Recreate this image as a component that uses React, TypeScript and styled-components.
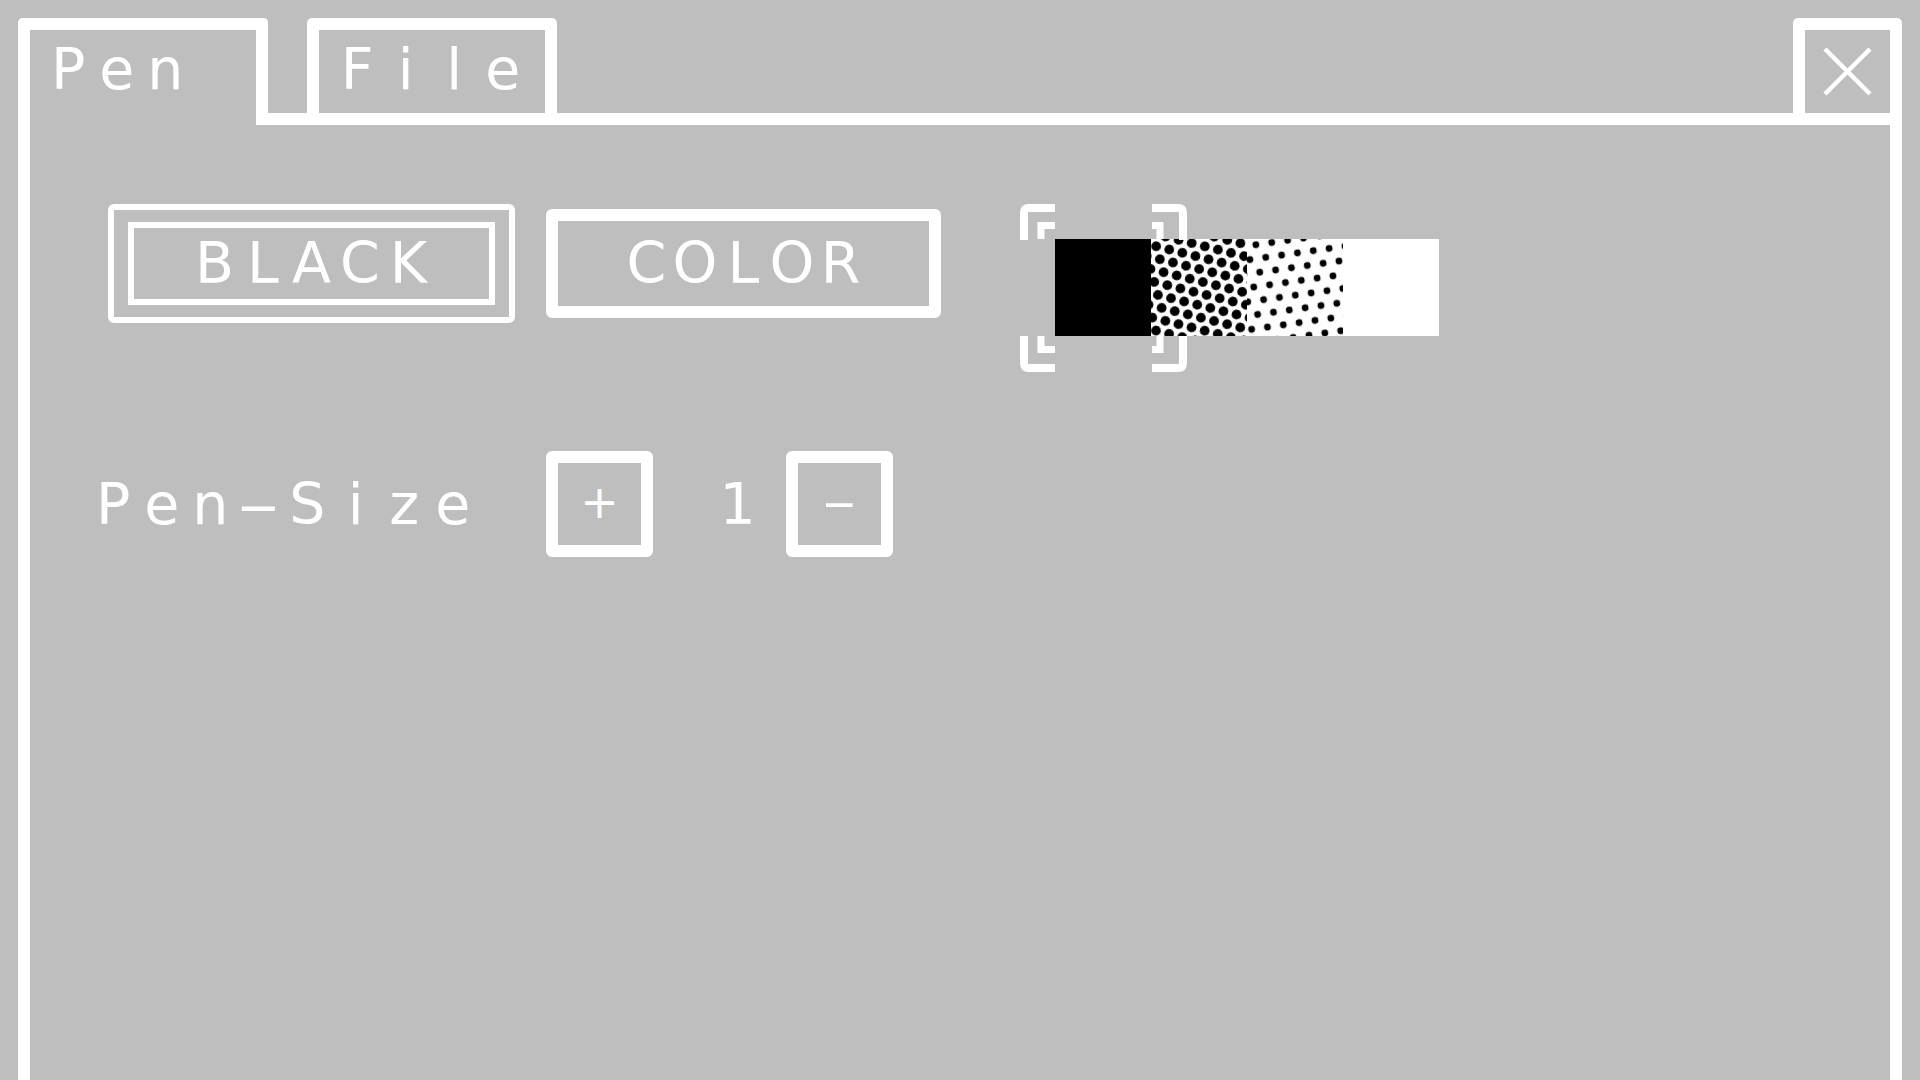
import React from 'react';
import styled, { createGlobalStyle } from 'styled-components';

const INK = '#ffffff';
const PAPER = '#bebebe';
const CELL = 48.5;
const SWATCH_W = 96;

const GlobalStyle = createGlobalStyle`
    html, body {
        margin: 0;
        padding: 0;
        background: ${PAPER};
        overflow: hidden;
    }
`;

const Screen = styled.div`
    box-sizing: border-box;
    height: 100vh;
    padding: 18px 18px 0;
    display: flex;
    flex-direction: column;
    background: ${PAPER};
    color: ${INK};
    font-family: 'DejaVu Sans', 'Liberation Sans', sans-serif;
    font-size: 57px;
    line-height: 57px;
`;

/* ---------- fixed-pitch text: every character sits in its own cell ---------- */

const CellRow = styled.span`
    display: inline-flex;
    white-space: pre;
`;

const Cell = styled.span`
    display: inline-block;
    width: ${CELL}px;
    text-align: center;
`;

// the hyphen of the sans face is too short for the cell, stretch it
const Dash = styled.span`
    display: inline-block;
    transform: scaleX(2.2);
`;

const Mono: React.FC<{ text: string }> = ({ text }) => (
    <CellRow>
        {Array.from(text).map((ch, i) => (
            <Cell key={i}>{ch === '-' ? <Dash>-</Dash> : ch === ' ' ? '\u00a0' : ch}</Cell>
        ))}
    </CellRow>
);

/* ---------- tab strip ---------- */

const TabBar = styled.div`
    display: flex;
    height: 107px;
    flex-shrink: 0;
`;

const Tab = styled.div<{ $active?: boolean }>`
    box-sizing: border-box;
    width: 250px;
    height: 107px;
    border: 12px solid ${INK};
    border-bottom-width: ${(p) => (p.$active ? 0 : 12)}px;
    border-radius: 5px 5px 0 0;
    padding: 11px 0 0 14px;
    cursor: pointer;
`;

const TabGap = styled.div<{ $grow?: boolean }>`
    box-sizing: border-box;
    height: 107px;
    width: 39px;
    flex: ${(p) => (p.$grow ? 1 : 'none')};
    border-bottom: 12px solid ${INK};
`;

const CloseTab = styled.button`
    box-sizing: border-box;
    width: 109px;
    height: 107px;
    margin: 0;
    padding: 0;
    background: none;
    border: 12px solid ${INK};
    border-radius: 5px 5px 0 0;
    display: flex;
    align-items: center;
    justify-content: center;
    cursor: pointer;
`;

const Panel = styled.div`
    flex: 1;
    border-left: 12px solid ${INK};
    border-right: 12px solid ${INK};
    padding: 79px 0 0 59px;
    display: flex;
    flex-direction: column;
`;

/* ---------- pen colour row ---------- */

const ColorRow = styled.div`
    display: flex;
    align-items: flex-start;
    margin-left: 19px;
`;

const ResetButton = styled.button`
    appearance: none;
    box-sizing: border-box;
    margin: 0;
    background: none;
    color: inherit;
    font: inherit;
    cursor: pointer;
`;

const ChoiceButton = styled(ResetButton)<{ $selected?: boolean }>`
    width: ${(p) => (p.$selected ? 407 : 395)}px;
    height: ${(p) => (p.$selected ? 119 : 109)}px;
    margin-top: ${(p) => (p.$selected ? 0 : 5)}px;
    border: ${(p) => (p.$selected ? 6 : 12)}px solid ${INK};
    border-radius: 6px;
    padding: ${(p) => (p.$selected ? '12px 14px' : '0')};
    display: flex;
    align-items: stretch;
`;

const ChoiceFace = styled.span<{ $framed?: boolean }>`
    flex: 1;
    display: flex;
    align-items: center;
    justify-content: center;
    border: ${(p) => (p.$framed ? `6px solid ${INK}` : 'none')};
`;

const Palette = styled.div`
    position: relative;
    display: flex;
    margin-left: 79px;
    padding: 35px 36px 36px 35px;
`;

const Swatch = styled.div`
    width: ${SWATCH_W}px;
    height: 97px;
    cursor: pointer;

    svg {
        display: block;
    }
`;

const Selector = styled.svg`
    position: absolute;
    top: 0;
    pointer-events: none;
`;

/* ---------- pen size row ---------- */

const SizeRow = styled.div`
    display: flex;
    align-items: center;
    margin-top: 79px;
`;

const SizeLabel = styled.span`
    margin-right: 69px;
`;

const StepButton = styled(ResetButton)`
    width: 107px;
    height: 106px;
    border: 12px solid ${INK};
    border-radius: 6px;
    padding: 0 0 4px;
    font-size: 46px;
    display: flex;
    align-items: center;
    justify-content: center;
`;

const SizeValue = styled.span`
    margin: 0 24px 0 12px;
`;

type Fill = 'black' | 'dense' | 'sparse' | 'white';

const halftone: Record<Fill, { period: number; radius: number; angle: number } | null> = {
    black: null,
    dense: { period: 13.5, radius: 4.9, angle: 14 },
    sparse: { period: 16, radius: 3.4, angle: -8 },
    white: null,
};

const SwatchArt: React.FC<{ fill: Fill }> = ({ fill }) => {
    const dots = halftone[fill];
    const id = `ht-${fill}`;
    if (!dots) {
        return (
            <svg width={SWATCH_W} height={97}>
                <rect width={SWATCH_W} height={97} fill={fill === 'black' ? '#000' : '#fff'} />
            </svg>
        );
    }
    const { period: p, radius: r, angle } = dots;
    const h = p * 1.732;
    return (
        <svg width={SWATCH_W} height={97}>
            <defs>
                <pattern
                    id={id}
                    width={p}
                    height={h}
                    patternUnits="userSpaceOnUse"
                    patternTransform={`rotate(${angle})`}
                >
                    <circle cx={p / 2} cy={h / 4} r={r} fill="#000" />
                    <circle cx={0} cy={(3 * h) / 4} r={r} fill="#000" />
                    <circle cx={p} cy={(3 * h) / 4} r={r} fill="#000" />
                </pattern>
            </defs>
            <rect width={SWATCH_W} height={97} fill="#fff" />
            <rect width={SWATCH_W} height={97} fill={`url(#${id})`} />
        </svg>
    );
};

// corner brackets drawn around the chosen swatch
const SelectorMarks: React.FC<{ index: number }> = ({ index }) => (
    <Selector width={168} height={168} viewBox="0 0 168 168" style={{ left: index * SWATCH_W }}>
        <g fill="none" stroke={INK} strokeWidth={8}>
            <path d="M4 36 V9 Q4 4 9 4 H35" />
            <path d="M132 4 H158 Q163 4 163 9 V36" />
            <path d="M4 132 V159 Q4 164 9 164 H35" />
            <path d="M132 164 H158 Q163 164 163 159 V132" />
        </g>
        <g fill="none" stroke={INK} strokeWidth={7} strokeLinejoin="miter">
            <path d="M21 35 V21.5 H35" />
            <path d="M132 21.5 H140 V35" />
            <path d="M21 132 V145.5 H35" />
            <path d="M132 145.5 H140 V132" />
        </g>
    </Selector>
);

const fills: Fill[] = ['black', 'dense', 'sparse', 'white'];

const App: React.FC = () => {
    const selectedFill = 0;
    const penSize = 1;

    return (
        <>
            <GlobalStyle />
            <Screen>
                <TabBar>
                    <Tab $active>
                        <Mono text="Pen" />
                    </Tab>
                    <TabGap />
                    <Tab>
                        <Mono text="File" />
                    </Tab>
                    <TabGap $grow />
                    <CloseTab aria-label="close">
                        <svg width={49} height={49} viewBox="0 0 49 49">
                            <path d="M2 2 L47 47 M47 2 L2 47" stroke={INK} strokeWidth={4.5} />
                        </svg>
                    </CloseTab>
                </TabBar>
                <Panel>
                    <ColorRow>
                        <ChoiceButton $selected>
                            <ChoiceFace $framed>
                                <Mono text="BLACK" />
                            </ChoiceFace>
                        </ChoiceButton>
                        <ChoiceButton style={{ marginLeft: 31 }}>
                            <ChoiceFace>
                                <Mono text="COLOR" />
                            </ChoiceFace>
                        </ChoiceButton>
                        <Palette>
                            {fills.map((f) => (
                                <Swatch key={f}>
                                    <SwatchArt fill={f} />
                                </Swatch>
                            ))}
                            <SelectorMarks index={selectedFill} />
                        </Palette>
                    </ColorRow>
                    <SizeRow>
                        <SizeLabel>
                            <Mono text="Pen-Size" />
                        </SizeLabel>
                        <StepButton>+</StepButton>
                        <SizeValue>
                            <Mono text={String(penSize).padStart(2, ' ')} />
                        </SizeValue>
                        <StepButton>
                            <Dash>-</Dash>
                        </StepButton>
                    </SizeRow>
                </Panel>
            </Screen>
        </>
    );
};

export default App;
